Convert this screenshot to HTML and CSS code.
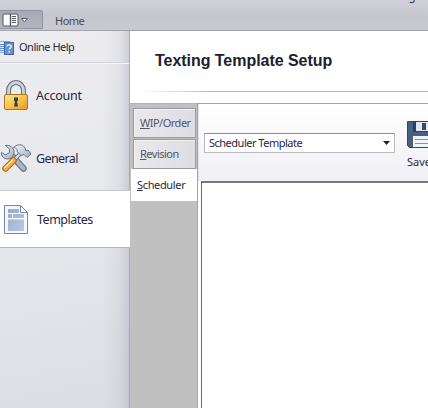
FILE: index.html
```html
<!DOCTYPE html>
<html lang="en">
<head>
    <meta charset="UTF-8">
    <meta name="viewport" content="width=device-width, initial-scale=1.0">
    <title>Texting Template Setup</title>
    <link rel="stylesheet" href="styles.css">
</head>
<body>

<header class="ribbon">
    <button class="app-menu" aria-label="Menu">
        <svg width="28" height="14" viewBox="0 0 28 14">
            <rect x="1" y="1" width="15" height="12" rx="1" fill="#fff" stroke="#55555f"/>
            <path d="M8.500 1v12" stroke="#55555f" stroke-width="1.4"/>
            <path d="M10 3.500h4M10 5.500h4M10 7.500h4M10 9.500h4" stroke="#55555f" stroke-width="1"/>
            <path d="M19.500 5.500h6L22.500 9z" fill="#fff" stroke="#62626d"/>
        </svg>
    </button>
    <span class="ribbon-tab">Home</span>
    <span class="window-title">g</span>
</header>

<div class="layout">
    <nav class="sidebar">
        <div class="help">
            <svg width="15" height="17" viewBox="0 0 15 17">
                <path d="M0 2.500h10v11H0" fill="#e6effa" stroke="#87a9d7"/>
                <path d="M0 5.500h4M0 7.500h4M0 9.500h4M0 11.500h4" stroke="#5b8ccb"/>
                <rect x="4.500" y="3.500" width="9" height="12" fill="#6c90cf" stroke="#4168af"/>
                <path d="M7 7.500c0-2.400 4.200-2.200 4.200.1 0 1.400-2 1.400-2 3M9.200 12v1.500" fill="none" stroke="#fff" stroke-width="1.3"/>
            </svg>
            <span>Online Help</span>
        </div>
        <div class="nav-item account">
            <svg width="32" height="32" viewBox="0 0 32 32">
                <defs>
                    <linearGradient id="gold" x1="0" y1="0" x2="1" y2="1">
                        <stop offset="0" stop-color="#ffe596"/>
                        <stop offset=".5" stop-color="#f8c44d"/>
                        <stop offset="1" stop-color="#e59a22"/>
                    </linearGradient>
                    <linearGradient id="steel" x1="0" y1="0" x2="1" y2="1">
                        <stop offset="0" stop-color="#f5f8fb"/>
                        <stop offset="1" stop-color="#9eabba"/>
                    </linearGradient>
                </defs>
                <path d="M8.500 16V10.500a7.500 8 0 0 1 15 0V16" fill="none" stroke="#66727f" stroke-width="5"/>
                <path d="M8.500 16V10.500a7.500 8 0 0 1 15 0V16" fill="none" stroke="#c9d3dc" stroke-width="2.800"/>
                <rect x="4.500" y="14.500" width="23" height="15" rx="1.500" fill="url(#gold)" stroke="#a9741c"/>
                <path d="M14 17.500h4v3l-1 1 1 5h-4l1-5-1-1z" fill="#32404b"/>
            </svg>
            <span>Account</span>
        </div>
        <div class="nav-item general">
            <svg width="32" height="32" viewBox="0 0 32 32">
                <!-- wrench -->
                <path d="M13 14l10.500 11.500" stroke="#63728a" stroke-width="6.500" stroke-linecap="round"/>
                <path d="M13 14l10.500 11.500" stroke="#a9b4c5" stroke-width="4.300" stroke-linecap="round"/>
                <path d="M5.500 2.500c4-1 8.500 2 8.500 6.500 0 4.500-3 7-6.500 7C4 16 1 13 1.500 9.500l4 2.500 4-2.500V6z" fill="url(#steel)" stroke="#5f738b"/>
                <!-- hammer -->
                <path d="M22 9L12 19" stroke="#60758d" stroke-width="4"/>
                <path d="M22 9L12 19" stroke="#dbe3ec" stroke-width="2.200"/>
                <path d="M15.500 3c4-2.500 8-1 9.500 2l1 3 2-1 3 4-4 3.500-3-3-3 1-4-4c1-2-1-4-3.500-4z" fill="url(#steel)" stroke="#60758d"/>
                <path d="M13.500 17.500l-8 8" stroke="#b2651d" stroke-width="6.500" stroke-linecap="round"/>
                <path d="M13.500 17.500l-8 8" stroke="#f6ad3f" stroke-width="4.500" stroke-linecap="round"/>
                <path d="M12.500 17l-7.500 7.500" stroke="#ffe9ae" stroke-width="1.400" stroke-linecap="round"/>
            </svg>
            <span>General</span>
        </div>
        <div class="nav-item templates selected">
            <svg width="32" height="32" viewBox="0 0 32 32">
                <defs>
                    <linearGradient id="block" x1="0" y1="0" x2="1" y2="1">
                        <stop offset="0" stop-color="#9aa9cc"/>
                        <stop offset="1" stop-color="#bbc7e2"/>
                    </linearGradient>
                </defs>
                <path d="M4.500 1.500h16l7 7v21h-23z" fill="#f4f7fc" stroke="#7387ad"/>
                <path d="M20.500 1.500v7h7z" fill="#fff" stroke="#7387ad"/>
                <path d="M8 5h11v4H8zM8 10h4v4H8zM13 10h11v4H13zM8 15.500h16V27H8z" fill="url(#block)"/>
            </svg>
            <span>Templates</span>
        </div>
    </nav>

    <main class="main">
        <div class="heading">
            <h1>Texting Template Setup</h1>
        </div>
        <div class="tab-panel">
            <div class="tabs">
                <div class="tab"><u>W</u>IP/Order</div>
                <div class="tab revision"><u>R</u>evision</div>
                <div class="tab active"><u>S</u>cheduler</div>
            </div>
            <div class="content">
                <div class="toolbar">
                    <div class="combo">
                        <span>Scheduler Template</span>
                        <svg width="7" height="4" viewBox="0 0 7 4"><path d="M0 0h7L3.500 4z" fill="#25252d"/></svg>
                    </div>
                    <div class="save">
                        <svg width="28" height="27" viewBox="0 0 28 27">
                            <path d="M.500.500h27v26h-25l-2-2z" fill="#49617f" stroke="#34475f"/>
                            <path d="M6 1h16v10H6z" fill="#2d4059"/>
                            <path d="M9 1h12v9H9z" fill="#e3e8ee"/>
                            <path d="M15 2h4v7h-4z" fill="#344b69"/>
                            <path d="M6 15h17v11H6z" fill="#f1f4f8"/>
                            <path d="M8 18.500h13M8 22.500h13" stroke="#7899c4"/>
                        </svg>
                        <span>Save</span>
                    </div>
                </div>
                <div class="editor"></div>
            </div>
        </div>
    </main>
</div>

</body>
</html>
```
FILE: styles.css
```css
:root {
    --text-color: #282840;
    --line-color: #a2a2ab;
    --gray: #c0c0c0;
}

* {
    box-sizing: border-box;
}

body {
    margin: 0;
    height: 408px;
    overflow: hidden;
    display: flex;
    flex-direction: column;
    font-family: "Noto Sans", "DejaVu Sans", sans-serif;
    font-size: 11px;
    line-height: 16px;
    letter-spacing: -.5px;
    color: var(--text-color);
    background-color: white;
}

svg {
    display: block;
    flex: none;
}

.ribbon {
    height: 31px;
    flex: none;
    display: flex;
    align-items: flex-start;
    background: linear-gradient(#d2d2da, #c6c6ce 50%, #c9c9d1);
    border-bottom: 1px solid var(--line-color);
}

.app-menu {
    width: 43px;
    height: 19px;
    margin-top: 10px;
    padding: 1px 0 0 2px;
    border: 1px solid #9292a0;
    border-left: 0;
    border-radius: 0 2px 0 0;
    background: linear-gradient(#a8a8b4, #b5b5c0);
}

.ribbon-tab {
    margin: 13px 0 0 12px;
    color: #4b4b5c;
}

.window-title {
    margin: -12px 0 0 auto;
    padding-right: 13px;
}

.layout {
    flex: 1;
    display: flex;
    min-height: 0;
}

.sidebar {
    width: 130px;
    flex: none;
    border-right: 1px solid #aaaab2;
    background:
        linear-gradient(90deg, transparent 102px, rgba(130, 130, 150, .1) 120px, rgba(120, 120, 145, .25)),
        linear-gradient(170deg, #ededf0, #e8e9ed 45%, #dddee4);
}

.help {
    height: 33px;
    display: flex;
    align-items: center;
    gap: 4px;
    border-bottom: 1px solid #f8f8fa;
    box-shadow: inset 0 -1px #d0d0d6;
}

.nav-item {
    height: 62px;
    display: flex;
    align-items: center;
    gap: 4px;
    font-size: 12.5px;
}

.account {
    height: 63px;
    letter-spacing: -.25px;
}

.general {
    padding-top: 1px;
    letter-spacing: -.6px;
}

.selected {
    width: 130px;
    height: 58px;
    margin-top: 1px;
    padding-top: 1px;
    gap: 5px;
    background-color: white;
    border-top: 1px solid #c7c7cd;
    border-bottom: 1px solid #b7b7be;
}

.main {
    flex: 1;
    min-width: 0;
    display: flex;
    flex-direction: column;
}

.heading {
    height: 72px;
    padding: 20px 0 0 25px;
    background: linear-gradient(90deg, transparent 10px, #b9b9bd 80px) 0 60px / 100% 1px no-repeat;
}

h1 {
    margin: 0;
    font-family: "Liberation Sans", sans-serif;
    font-size: 16px;
    line-height: 20px;
    font-weight: bold;
    letter-spacing: -.04px;
    color: #20202e;
}

.tab-panel {
    flex: 1;
    display: flex;
}

.tabs {
    width: 67px;
    flex: none;
    padding: 4px 0 0 1px;
    border-top: 1px solid #b3b3b7;
    background-color: var(--gray);
}

.tab {
    height: 30px;
    margin: 0 1px 1px 2px;
    padding: 6px 0 0 6px;
    border: 1px solid #9b9ba4;
    background: linear-gradient(90deg, #e8e8ed, #dddde4);
    box-shadow: inset 1px 1px #f3f3f6;
    white-space: nowrap;
    color: #555563;
}

.revision {
    margin-bottom: 0;
}

.tab u {
    text-underline-offset: 1px;
}

.active {
    height: 32px;
    margin: 0;
    padding: 8px 0 0 6px;
    border: 0;
    background: white;
    box-shadow: none;
    color: var(--text-color);
    letter-spacing: -.35px;
}

.content {
    flex: 1;
    min-width: 0;
    display: flex;
    flex-direction: column;
    border-left: 1px solid var(--line-color);
    border-top: 1px solid var(--line-color);
}

.toolbar {
    height: 77px;
    display: flex;
    align-items: flex-start;
    overflow: hidden;
    border-left: 1px solid #e3e3e8;
    background: linear-gradient(#fff, #f0f0f5);
}

.combo {
    width: 191px;
    height: 20px;
    flex: none;
    margin: 29px 0 0 5px;
    padding: 0 4px 0 4px;
    display: flex;
    align-items: center;
    justify-content: space-between;
    border: 1px solid #babac2;
    border-top-color: #8e8e98;
    background-color: white;
}

.save {
    flex: none;
    margin: 17px 0 0 12px;
    letter-spacing: 0;
}

.save span {
    display: block;
    margin-top: 6px;
}

.editor {
    flex: 1;
    margin-left: 3px;
    border-left: 1px solid #68686d;
    border-top: 2px solid #77777d;
    background-color: white;
}
```
